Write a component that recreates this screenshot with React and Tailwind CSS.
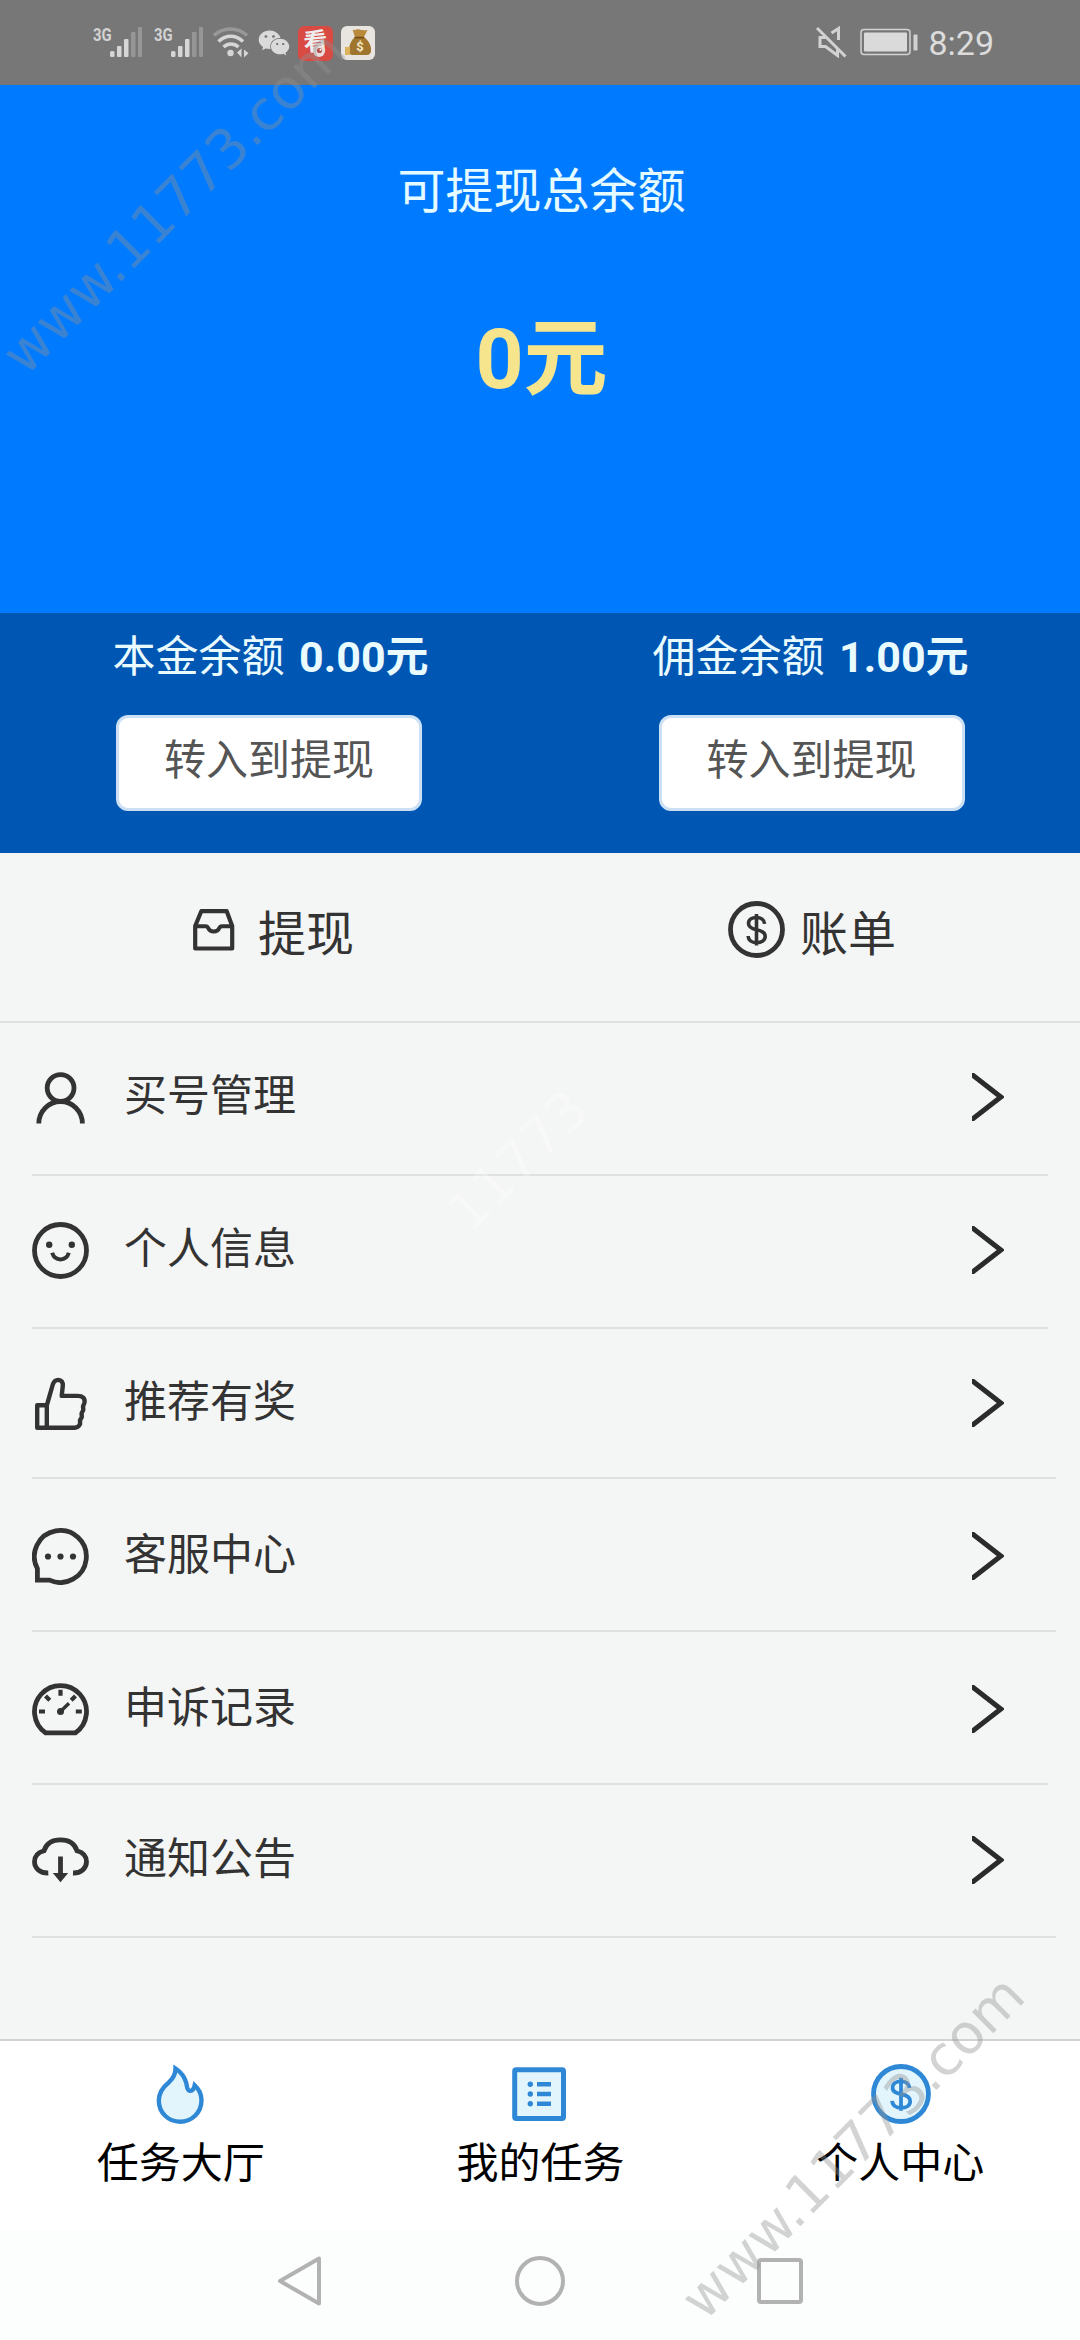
import { FaWeixin } from 'react-icons/fa'

const balances = [
  { label: '本金余额', amount: '0.00元', button: '-ml-[2px]' },
  { label: '佣金余额', amount: '1.00元', button: 'ml-[3px]' },
]

const menu = [
  { label: '买号管理', icon: PersonIcon, row: 'h-[153px] w-[1016px]' },
  { label: '个人信息', icon: SmileIcon, row: 'h-[153px] w-[1016px]' },
  { label: '推荐有奖', icon: ThumbIcon, row: 'h-[150px] w-[1024px]' },
  { label: '客服中心', icon: ChatIcon, row: 'h-[153px] w-[1024px] pt-[3px]' },
  { label: '申诉记录', icon: GaugeIcon, row: 'h-[153px] w-[1016px] pt-[3px]' },
  { label: '通知公告', icon: CloudIcon, row: 'h-[153px] w-[1024px] pt-px' },
]

const tabs = [
  { label: '任务大厅', icon: FlameIcon },
  { label: '我的任务', icon: ListIcon },
  { label: '个人中心', icon: CoinIcon },
]

function Icon({ children }) {
  return (
    <svg viewBox="0 0 57 57" className="w-[57px] h-[57px] shrink-0" fill="none" stroke="#333333" strokeWidth="4.8">
      {children}
    </svg>
  )
}

function PersonIcon() {
  return (
    <Icon>
      <circle cx="28.6" cy="19" r="13.4" />
      <path d="M6.8 54.5a21.8 22 0 0 1 43.6 0" />
    </Icon>
  )
}

function SmileIcon() {
  return (
    <Icon>
      <circle cx="28.5" cy="28.5" r="26" />
      <circle cx="17.2" cy="22.8" r="3.2" fill="#333333" stroke="none" />
      <circle cx="39.8" cy="22.8" r="3.2" fill="#333333" stroke="none" />
      <path d="M20.2 30.8c1.2 4.2 4.5 6.6 8.3 6.6s7.1-2.4 8.3-6.6" strokeWidth="4" />
    </Icon>
  )
}

function ThumbIcon() {
  return (
    <Icon>
      <path
        d="M14.8 30.3 20.8 9.5Q22.3 4.9 26.300 4.900q4.700.300 4.500 5.900l-1.100 10.100H45.500q8 0 7 6.500l-1.500 4 .300 3.500-1.700 3.500.200 3.600-1.800 3.400.100 3.600Q46.500 52.800 42.500 52.800H5.200V30.300H14.800V52.800"
        strokeWidth="4.4"
        strokeLinejoin="round"
      />
    </Icon>
  )
}

function ChatIcon() {
  return (
    <Icon>
      <path d="M5.4 52V40.700A26 26 0 1 1 17.500 52.100Z" />
      <circle cx="16" cy="28.5" r="3.1" fill="#333333" stroke="none" />
      <circle cx="28.5" cy="28.5" r="3.1" fill="#333333" stroke="none" />
      <circle cx="41" cy="28.5" r="3.1" fill="#333333" stroke="none" />
    </Icon>
  )
}

function GaugeIcon() {
  return (
    <Icon>
      <path d="M13.500 51.800A26 26 0 1 1 43.500 51.800Z" />
      <path d="M7 30.5h6M43.8 30.5h6M28.5 8.7v6M13.5 15l4.3 4.3M43.5 15l-4.3 4.3" strokeWidth="4.2" />
      <circle cx="28.5" cy="30.5" r="3.5" fill="#333333" stroke="none" />
      <path d="M28.5 30.5 37 22.2" strokeWidth="3.4" />
    </Icon>
  )
}

function CloudIcon() {
  return (
    <Icon>
      <path d="M16.3 41C8.500 41.300 2.500 36.500 2.500 29.800c0-6 3.700-9.400 9.500-11C14.200 11.500 20 7.800 28.500 7.800S42.800 11.500 45 18.800c5.800 1.600 9.500 5 9.500 11C54.500 36.500 48.500 41.300 41 41" />
      <path d="M28.500 24.500V43" />
      <path d="M20.800 41h15.400l-7.700 9.300Z" fill="#333333" stroke="none" />
    </Icon>
  )
}

function InboxIcon() {
  return (
    <Icon>
      <path d="M10.2 25 16.300 10.200h25.400L47.200 25v22.500h-37Z" strokeWidth="4.2" strokeLinejoin="round" />
      <path d="M10.200 25.300h10.500c1.500 0 2 .7 2.500 1.800 1.800 4.600 9.300 4.600 11.100 0 .5-1.100 1-1.800 2.500-1.800h10.400" strokeWidth="4" />
    </Icon>
  )
}

function DollarSign() {
  return (
    <path
      d="M36.600 22.800c-.3-4.100-3.700-6.300-8.100-6.300-4.600 0-8 2.200-8 6 0 4.200 3.800 5.300 8.200 6.200s8.500 2.300 8.500 6.600c0 4.100-3.900 6.400-8.600 6.400-4.900 0-8.300-2.500-8.500-6.700M28.500 13v31.500"
      strokeWidth="3.600"
    />
  )
}

function BillIcon() {
  return (
    <Icon>
      <circle cx="28.5" cy="28.5" r="26" />
      <DollarSign />
    </Icon>
  )
}

function FlameIcon() {
  return (
    <svg viewBox="0 0 60 60" className="w-[60px] h-[60px]" fill="#e2f5fc" stroke="#2f88d6" strokeWidth="4.4">
      <path d="M24.5 4.5c0 5.500-2.500 10-6.500 13.700C12 23 7.800 29 7.800 36.500 7.800 49 17.500 57.700 29 57.700S50.500 49 50.500 36c0-6-2.500-10.800-6.800-14.700-.8 3.700-2.200 6-5 5.500-2.900-.5-2.600-4.500-3.500-8-1.700-6.500-5.700-11-10.700-14.300Z" />
    </svg>
  )
}

function ListIcon() {
  return (
    <svg viewBox="0 0 60 60" className="w-[60px] h-[60px]" fill="#e2f5fc" stroke="#2f88d6" strokeWidth="5">
      <rect x="4.700" y="5.700" width="48.800" height="48.800" rx="1.500" />
      <path d="M27 20.300h14M27 30h14M27 39.800h14" strokeWidth="4.600" />
      <g fill="#2f88d6" stroke="none">
        <circle cx="20.3" cy="20.3" r="2.7" />
        <circle cx="20.3" cy="30" r="2.7" />
        <circle cx="20.3" cy="39.8" r="2.7" />
      </g>
    </svg>
  )
}

function CoinIcon() {
  return (
    <svg viewBox="0 0 57 57" className="w-[60px] h-[60px] ml-[2px]" fill="none" stroke="#2f88d6" strokeWidth="4.6">
      <circle cx="28.5" cy="28.5" r="26.1" fill="#e2f5fc" />
      <DollarSign />
    </svg>
  )
}

function Signal() {
  return (
    <div className="flex w-[61px] h-[34px]">
      <span className="w-[17px] origin-left scale-x-[0.78] font-bold text-[19px] leading-[18px] text-[#d2d2d2]">3G</span>
      <svg viewBox="0 0 32 34" className="w-8 h-[34px]">
        <g fill="#d6d6d6">
          <rect x="0" y="25" width="4.5" height="6" rx="1.5" />
          <rect x="7" y="20" width="4.5" height="11" rx="1" />
          <rect x="14" y="13" width="4.5" height="18" rx="1" />
        </g>
        <rect x="21" y="6" width="4.5" height="25" rx="1" fill="#969696" />
        <rect x="28" y="1" width="4" height="30" rx="1" fill="#969696" />
      </svg>
    </div>
  )
}

function StatusBar() {
  return (
    <header className="flex items-start justify-between h-[85px] bg-[#777777] pt-[26px] pl-[93px] pr-[86px]">
      <div className="flex">
        <Signal />
        <Signal />
        <svg viewBox="0 0 36 34" className="w-9 h-[34px] -ml-[2px]" fill="none" stroke="#d6d6d6" strokeWidth="3.4">
          <path d="M1 9.5C10 .8 25 .8 34 9.5" stroke="#989898" />
          <path d="M5.5 15.5c7-7 17.500-7 24.500 0M10.500 21c4.500-4 10.500-4 15 0" />
          <circle cx="17.5" cy="27" r="3.2" fill="#d6d6d6" stroke="none" />
          <path d="M28.500 22.500v9l-4.500-5ZM31 23.500v8l4.500-4.300Z" fill="#d6d6d6" stroke="none" />
        </svg>
        <FaWeixin className="w-[32px] h-[34px] ml-[9px] text-[#dadada]" />
        <div className="relative flex justify-center w-[35px] h-[35px] ml-2 pt-[3px] rounded-md bg-[#d84a42] text-[#eeeeee] text-[24px] leading-[26px] font-bold">
          <span className="-rotate-6">看</span>
          <svg viewBox="0 0 14 14" className="absolute left-[14px] top-[18px] w-[14px] h-[14px]">
            <circle cx="7" cy="7" r="6" fill="#e9dddd" />
            <circle cx="7.500" cy="6.500" r="2.600" fill="#b5504c" />
            <circle cx="8.500" cy="5.800" r="1" fill="#ffffff" />
          </svg>
        </div>
        <svg viewBox="0 0 34 34" className="w-[34px] h-[34px] ml-2">
          <rect width="34" height="34" rx="6" fill="#e8e5e1" />
          <path d="M11.500 3.500c2.500 1.500 3.500-1 6-.2 2.500.7 4 1.200 9 .7l-3.500 7H14Z" fill="#b98a3c" />
          <path d="M14 11h9c5 4 7.500 9 7 14-.4 3.500-2.500 4-5 4H12c-3 0-4-2-4-5 0-5 2.500-10 6-13Z" fill="#a0762f" />
          <path d="M13.500 11.500H23" stroke="#6f4b16" strokeWidth="1.500" />
          <path d="M4 21h5v8H4z" fill="#dcb35a" />
          <text x="19" y="24.5" textAnchor="middle" fontSize="13" fontWeight="700" fill="#f2e6c4">$</text>
        </svg>
      </div>
      <div className="flex">
        <svg viewBox="0 0 31 32" className="w-[31px] h-8" fill="none" stroke="#d2d2d2" strokeWidth="3">
          <path d="M1 2 29.500 30.500M15.500 7 22.500 2.500V14M9.500 11.500H4v9h5.500l12 9V23" />
        </svg>
        <svg viewBox="0 0 58 28" className="w-[58px] h-7 ml-[13px] mt-[2px]">
          <rect x="1" y="1.500" width="49" height="25" rx="3" fill="none" stroke="#d2d2d2" strokeWidth="1.500" />
          <rect x="4" y="4.500" width="43" height="19" rx="1" fill="#dadada" />
          <rect x="53.500" y="6.500" width="4" height="16" rx="1" fill="#d2d2d2" />
        </svg>
        <span className="ml-[10px] text-[34px] leading-[34px] text-[#dcdcdc]">8:29</span>
      </div>
    </header>
  )
}

export default function App() {
  return (
    <div className="relative flex flex-col w-[1080px] h-[2340px] overflow-hidden bg-[#f4f6f5] font-['Roboto','Noto_Sans_CJK_SC',sans-serif] text-[#333333]">
      <StatusBar />

      {/* Withdrawable total */}
      <section className="flex flex-col items-center h-[528px] pt-[83px] pl-[3px] bg-[#007bff]">
        <h1 className="text-[48px] leading-[48px] text-[#e6fbff]">可提现总余额</h1>
        <p className="mt-[102px] text-[84px] leading-[84px] font-bold text-[#f6e58d]">0元</p>
      </section>

      {/* Principal / commission */}
      <section className="grid grid-cols-2 h-[240px] pt-[23px] bg-[#0056b3]">
        {balances.map((item) => (
          <div key={item.label} className="flex flex-col items-center">
            <p className="pl-px text-[43px] leading-[43px] text-[#e9fbff] whitespace-nowrap">
              {item.label} <strong className="ml-1">{item.amount}</strong>
            </p>
            <button
              className={`mt-9 w-[306px] h-24 pb-1 rounded-[12px] border-[3px] border-[#cbe0f5] bg-white text-[42px] leading-[42px] text-[#555555] ${item.button}`}
            >
              转入到提现
            </button>
          </div>
        ))}
      </section>

      <section className="grid grid-cols-2 h-[170px] pb-4 border-b-2 border-[#dfe1e1] text-[48px] leading-[48px]">
        <div className="flex items-center justify-center gap-4 pr-px">
          <InboxIcon />
          <span className="pt-3">提现</span>
        </div>
        <div className="flex items-center justify-center gap-[15px] pl-1">
          <BillIcon />
          <span className="pt-3">账单</span>
        </div>
      </section>

      <ul className="flex-1 pl-8">
        {menu.map(({ label, icon: MenuIcon, row }) => (
          <li key={label} className={`border-b-2 border-[#dfe1e1] ${row}`}>
            <div className="flex items-center w-[972px] h-[148px]">
              <MenuIcon />
              <span className="ml-[35px] pb-[2px] text-[43px] leading-[43px]">{label}</span>
              <svg viewBox="0 0 32 48" className="w-8 h-12 ml-auto" fill="none" stroke="#2b2b2b" strokeWidth="5">
                <path d="M-2 0 28.800 24-2 48" />
              </svg>
            </div>
          </li>
        ))}
      </ul>

      <nav className="grid grid-cols-3 h-[191px] pt-[23px] pl-px border-t-2 border-[#d0d3d2] bg-white text-black">
        {tabs.map(({ label, icon: TabIcon }) => (
          <div key={label} className="flex flex-col items-center">
            <TabIcon />
            <span className="mt-[19px] text-[42px] leading-[42px]">{label}</span>
          </div>
        ))}
      </nav>

      {/* Android navigation keys */}
      <footer className="flex items-center justify-center gap-[190px] h-[110px] pb-2 bg-[#fcfefd]">
        <svg viewBox="0 0 50 50" className="w-[50px] h-[50px]" fill="none" stroke="#b2b2b2" strokeWidth="4" strokeLinejoin="round">
          <path d="M44 2.500v45L5 25Z" />
        </svg>
        <div className="w-[50px] h-[50px] rounded-full border-4 border-[#b2b2b2]" />
        <div className="flex justify-center w-[50px]">
          <div className="w-[46px] h-[46px] rounded-[4px] border-4 border-[#b2b2b2]" />
        </div>
      </footer>

      {/* Watermarks */}
      <div className="absolute -left-[58px] top-[175px] w-[464px] text-center whitespace-nowrap -rotate-45 font-['DejaVu_Sans'] text-[55px] leading-[55px] text-[#929292]/40">
        www.11773.com
      </div>
      <div className="absolute left-[286px] top-[1134px] w-[464px] text-center whitespace-nowrap -rotate-45 font-['DejaVu_Sans'] text-[54px] leading-[54px] text-white/25">
        11773
      </div>
      <div className="absolute left-[621px] top-[2120px] w-[464px] text-center whitespace-nowrap -rotate-45 font-['DejaVu_Sans'] text-[55px] leading-[55px] text-[#929292]/40">
        www.11773.com
      </div>
    </div>
  )
}
